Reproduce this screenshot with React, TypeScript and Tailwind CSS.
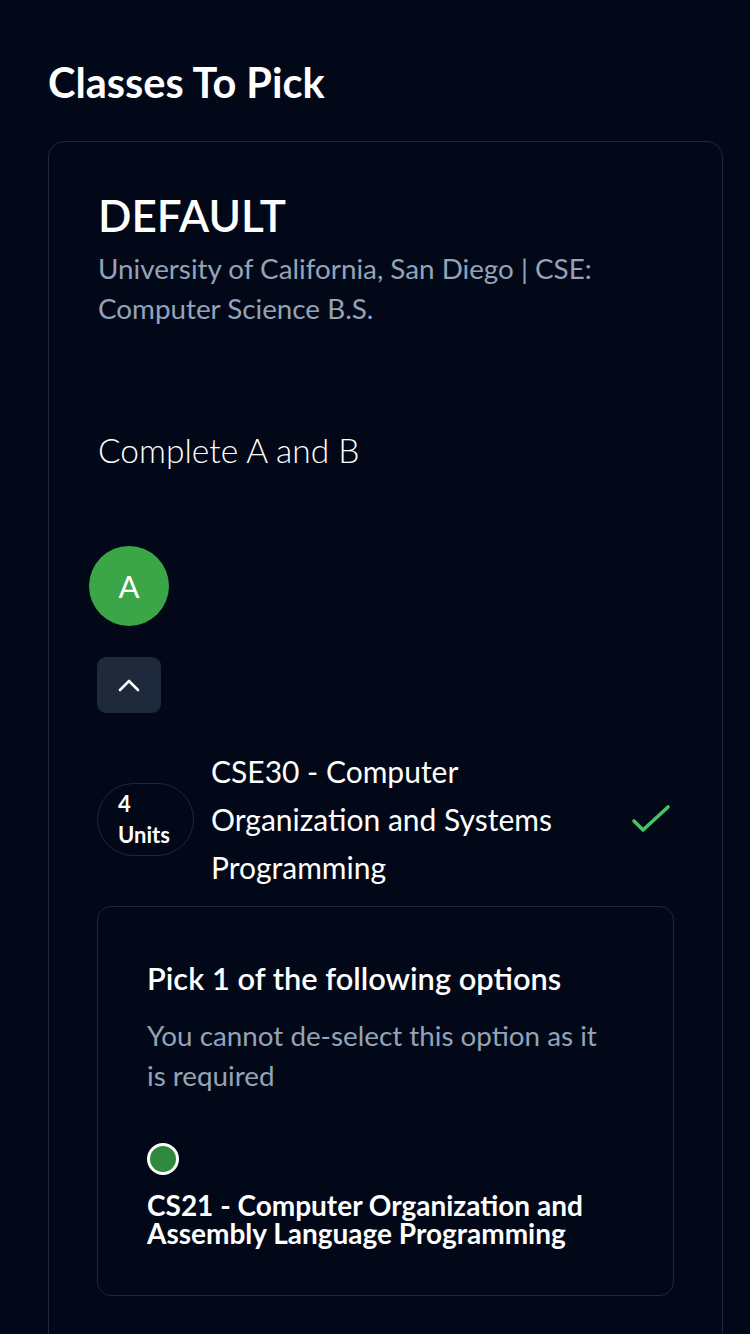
import React from "react";

const font = { fontFamily: "Lato, 'Open Sans', sans-serif" };

function ChevronUp() {
	return (
		<svg width="24" height="16" viewBox="0 0 24 16" fill="none" stroke="white" strokeWidth="2.6" strokeLinecap="round" strokeLinejoin="round">
			<path d="M3 13 12 4l9 9" />
		</svg>
	);
}

function CheckMark() {
	return (
		<svg width="40" height="30" viewBox="0 0 40 30" fill="none" stroke="#42c45e" strokeWidth="3.6" strokeLinecap="round" strokeLinejoin="round">
			<path d="M3 17 12 26 37 3" />
		</svg>
	);
}

export default function App() {
	return (
		<div className="h-[1334px] overflow-hidden bg-[#020817] pl-[48px] pr-[27px] pt-[57px] text-white" style={font}>
			{/* Heading */}
			<h1 className="text-[41.5px] leading-[50px] font-bold">Classes To Pick</h1>

			{/* Main card */}
			<div className="mt-[34px] rounded-[16px] border border-[#1e293b] px-[49px] pt-[45px] pb-[120px]">
				<h2 className="text-[44px] leading-[56px] font-semibold">DEFAULT</h2>
				<p className="mt-[6px] text-[27.8px] leading-[40px] text-[#94a3b8]">
					University of California, San Diego | CSE: Computer Science B.S.
				</p>

				<p className="mt-[99px] text-[33.5px] leading-[44px] font-light">Complete A and B</p>

				{/* Group A */}
				<div className="mt-[74px] -ml-[9px] flex h-[80px] w-[80px] items-center justify-center rounded-full bg-[#3aa647] text-[31px]">
					A
				</div>

				<button className="mt-[31px] -ml-px flex h-[56px] w-[64px] items-center justify-center rounded-[9px] bg-[#1e293b]">
					<ChevronUp />
				</button>

				{/* Course row */}
				<div className="mt-[34px] flex items-center">
					<div className="-ml-px flex h-[73px] w-[97px] shrink-0 flex-col justify-center rounded-full border border-[#1e293b] pl-[20px] text-[22px] leading-[31px] font-bold">
						<span>4</span>
						<span>Units</span>
					</div>
					<div className="ml-[17px] w-[375px] text-[30px] leading-[48px]">
						CSE30 - Computer Organization and Systems Programming
					</div>
					<div className="ml-auto mr-[2px]">
						<CheckMark />
					</div>
				</div>

				{/* Options card */}
				<div className="mt-[15px] -mx-px rounded-[14px] border border-[#1e293b] px-[49px] pt-[52px] pb-[48px]">
					<h3 className="text-[30.8px] leading-[40px] font-semibold">Pick 1 of the following options</h3>
					<p className="mt-[17px] max-w-[462px] text-[27.8px] leading-[40px] text-[#94a3b8]">
						You cannot de-select this option as it is required
					</p>
					<div className="mt-[47px] h-[32px] w-[32px] rounded-full border-[3px] border-white bg-[#2f8a3e]" />
					<p className="mt-[16px] text-[28px] leading-[28px] font-bold">
						CS21 - Computer Organization and Assembly Language Programming
					</p>
				</div>
			</div>
		</div>
	);
}
